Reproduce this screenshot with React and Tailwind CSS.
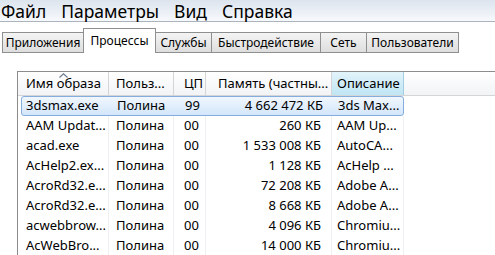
import React from "react";

const font = { fontFamily: '"Noto Sans", "Open Sans", sans-serif' };

const tabs = [
    ["Приложения", "w-[82px]"],
    ["Процессы", "w-[73px]"],
    ["Службы", "w-[57px]"],
    ["Быстродействие", "w-[110px]"],
    ["Сеть", "w-[47px]"],
    ["Пользователи", "w-[93px]"],
];

const rows = [
    ["3dsmax.exe", "Полина", "99", "4 662 472 КБ", "3ds Max..."],
    ["AAM Updat...", "Полина", "00", "260 КБ", "AAM Up..."],
    ["acad.exe", "Полина", "00", "1 533 008 КБ", "AutoCA..."],
    ["AcHelp2.ex...", "Полина", "00", "1 128 КБ", "AcHelp ..."],
    ["AcroRd32.e...", "Полина", "00", "72 208 КБ", "Adobe A..."],
    ["AcroRd32.e...", "Полина", "00", "8 668 КБ", "Adobe A..."],
    ["acwebbrow...", "Полина", "00", "4 096 КБ", "Chromiu..."],
    ["AcWebBro...", "Полина", "00", "14 000 КБ", "Chromiu..."],
];

function Cells({ r }) {
    return (
        <>
            <div className="w-[91px] pl-[8px] border-r border-[#eef0f3]">{r[0]}</div>
            <div className="w-[65px] pl-[7px] border-r border-[#eef0f3]">{r[1]}</div>
            <div className="w-[32px] pl-[10px] border-r border-[#eef0f3]">{r[2]}</div>
            <div className="w-[126px] pr-[10px] text-right border-r border-[#eef0f3]">{r[3]}</div>
            <div className="w-[72px] pl-[5px] border-r border-[#eef0f3]">{r[4]}</div>
        </>
    );
}

export default function App() {
    return (
        <div className="w-[495px] h-[255px] overflow-hidden bg-white text-black" style={font}>
            {/* menu */}
            <div className="h-[22px] flex items-center gap-[15px] pl-[1px] text-[17.5px] leading-[22px] bg-gradient-to-b from-[#dce4ee] to-[#f7f9fc] border-b border-[#aab3be]">
                <span>Файл</span>
                <span>Параметры</span>
                <span>Вид</span>
                <span>Справка</span>
            </div>
            {/* tabs */}
            <div className="h-[31px] flex items-end pl-[2px] bg-white">
                {tabs.map(([t, w], i) =>
                    i === 1 ? (
                        <div key={t} className={`${w} h-[25px] -ml-px flex justify-center pt-[3px] bg-white border border-b-0 border-[#8e8f8f] text-[12px]`}>
                            {t}
                        </div>
                    ) : (
                        <div key={t} className={`${w} h-[21px] -ml-px first:ml-0 flex items-center justify-center bg-gradient-to-b from-[#f4f4f4] to-[#dedede] border border-[#8e8f8f] text-[12px]`}>
                            {t}
                        </div>
                    )
                )}
            </div>
            {/* table */}
            <div className="pl-[17px] pt-[18px]">
                <div className="border-l border-t border-[#8c8c8c] text-[13px]">
                    <div className="h-[24px] flex items-center bg-gradient-to-b from-white to-[#f1f3f6] border-b border-[#d5d5d5]">
                        <div className="relative h-full w-[91px] pl-[8px] flex items-center border-r border-[#d5d5d5]">
                            Имя образа
                            <svg className="absolute left-[41px] top-[1px]" width="9" height="5" viewBox="0 0 9 5">
                                <path d="M0.5 4.5 L4.5 0.8 L8.5 4.5" fill="none" stroke="#6b7a8c" strokeWidth="1.1" />
                            </svg>
                        </div>
                        <div className="h-full w-[65px] pl-[7px] flex items-center border-r border-[#d5d5d5]">Польз...</div>
                        <div className="h-full w-[32px] pl-[10px] flex items-center border-r border-[#d5d5d5]">ЦП</div>
                        <div className="h-full w-[126px] pl-[12px] flex items-center border-r border-[#d5d5d5]">Память (частны...</div>
                        <div className="h-full w-[72px] pl-[5px] flex items-center border-r border-[#a3cde0] bg-gradient-to-b from-[#e3f4fb] to-[#bfe5f4]">Описание</div>
                    </div>
                    {rows.map((r, i) =>
                        i === 0 ? (
                            <div key={i} className="h-[20px] flex items-center">
                                <div className="ml-[3px] h-[20px] w-[383px] flex items-center rounded-[3px] border border-[#84acdd] bg-gradient-to-b from-[#f1f7fe] to-[#d3e6fb]">
                                    <div className="w-[88px] pl-[4px]">{r[0]}</div>
                                    <div className="w-[65px] pl-[7px]">{r[1]}</div>
                                    <div className="w-[32px] pl-[10px]">{r[2]}</div>
                                    <div className="w-[126px] pr-[10px] text-right">{r[3]}</div>
                                    <div className="w-[70px] pl-[5px]">{r[4]}</div>
                                </div>
                            </div>
                        ) : (
                            <div key={i} className="h-[20px] flex items-center">
                                <Cells r={r} />
                            </div>
                        )
                    )}
                </div>
            </div>
        </div>
    );
}
